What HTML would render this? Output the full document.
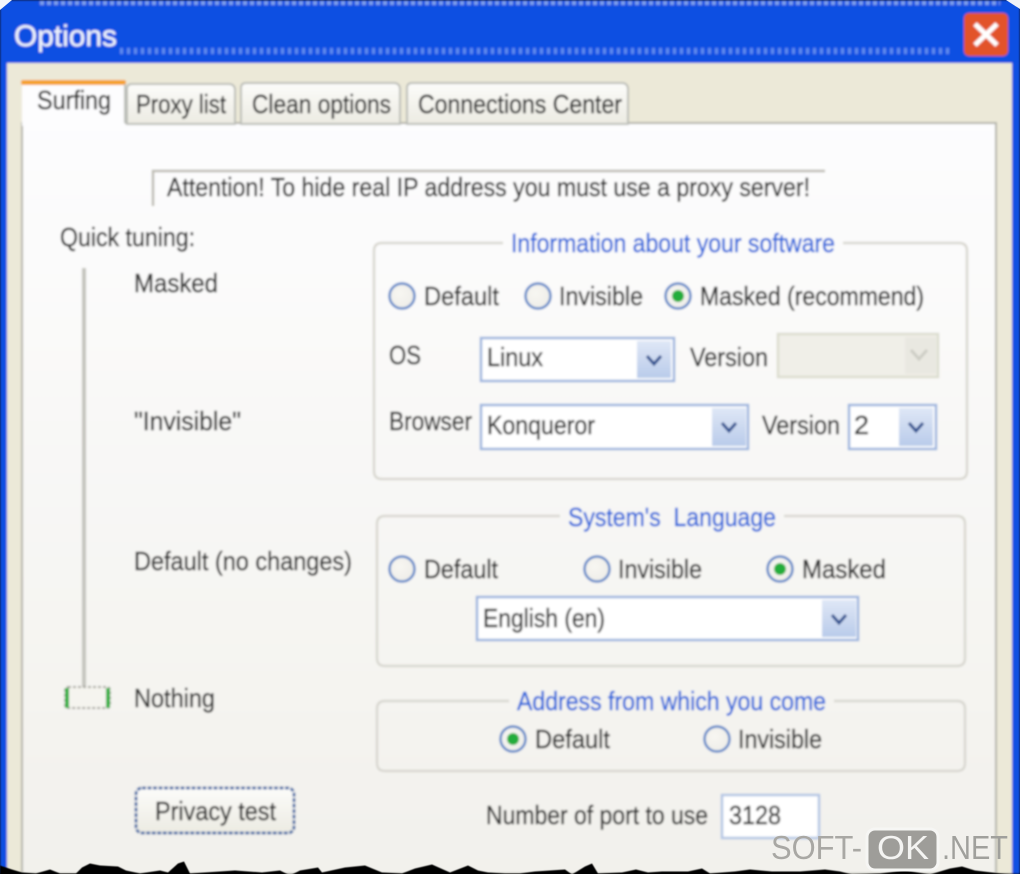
<!DOCTYPE html>
<html><head><meta charset="utf-8"><title>Options</title>
<style>
html,body{margin:0;padding:0;background:#000;width:1020px;height:874px;overflow:hidden}
svg{display:block}
text{font-family:"Liberation Sans",sans-serif;font-size:26px;fill:#333;stroke:#333;stroke-width:.45px;transform:translateY(-1px)}
.b{fill:#2a68dc;stroke:#2a68dc}
.w{stroke:none;transform:none}
</style></head><body>
<svg width="1020" height="874" viewBox="0 0 1020 874" xmlns="http://www.w3.org/2000/svg">
<defs>
<linearGradient id="p" x1="0" y1="0" x2="0" y2="1"><stop offset="0" stop-color="#fdfdfe"/><stop offset="1" stop-color="#f2f1ec"/></linearGradient>
<linearGradient id="t" x1="0" y1="0" x2="0" y2="1"><stop offset="0" stop-color="#fcfcfa"/><stop offset="1" stop-color="#ecebe2"/></linearGradient>
<linearGradient id="ar" x1="0" y1="0" x2="0" y2="1"><stop offset="0" stop-color="#dfe7f6"/><stop offset="1" stop-color="#b9cbea"/></linearGradient>
<radialGradient id="rd" cx=".4" cy=".4" r=".7"><stop offset="0" stop-color="#f7f6f2"/><stop offset="1" stop-color="#eeede7"/></radialGradient>
<filter id="bl" x="-2%" y="-2%" width="104%" height="104%"><feGaussianBlur stdDeviation="1.1"/></filter>
<filter id="bl2"><feGaussianBlur stdDeviation="0.4"/></filter>
</defs>
<g filter="url(#bl)">
<rect width="1020" height="874" fill="#0a50e2"/>
<line x1="40" y1="3" x2="1000" y2="3" stroke="#7ea0ec" stroke-width="4" stroke-dasharray="4 3"/>
<line x1="120" y1="51" x2="950" y2="51" stroke="#5f8cee" stroke-width="6" stroke-dasharray="3 4"/>
<rect x="7" y="63" width="1005" height="811" fill="#ece9d8"/>
<rect x="22" y="123" width="974" height="751" fill="url(#p)" stroke="#b4b3aa" stroke-width="2"/>
<text x="14" y="47" textLength="103" lengthAdjust="spacingAndGlyphs" style="font-size:30px;fill:#eef2fb;stroke:#eef2fb">Options</text>
<rect x="964" y="13" width="44" height="43" rx="5" fill="#e2532a"/>
<path d="M975 24L997 45M997 24L975 45" stroke="#fff" stroke-width="5"/>

<!-- tabs -->
<path d="M127 124V89q0-5 5-5H229q5 0 6 5V124Z" fill="url(#t)" stroke="#bcbeb8" stroke-width="2"/>
<path d="M241 124V88q0-5 5-5H394q5 0 6 5V124Z" fill="url(#t)" stroke="#bcbeb8" stroke-width="2"/>
<path d="M407 124V88q0-5 5-5H622q5 0 6 5V124Z" fill="url(#t)" stroke="#bcbeb8" stroke-width="2"/>
<path d="M22 126V84q0-3 3-3H122q3 0 3 3V126Z" fill="#fdfdfe"/>
<rect x="21" y="80" width="105" height="5" rx="2" fill="#f5a02c"/>
<line x1="125" y1="84" x2="125" y2="123" stroke="#bcbeb8" stroke-width="2"/>
<text x="37" y="110" textLength="74" lengthAdjust="spacingAndGlyphs">Surfing</text>
<text x="136" y="114" textLength="90" lengthAdjust="spacingAndGlyphs">Proxy list</text>
<text x="252" y="114" textLength="139" lengthAdjust="spacingAndGlyphs">Clean options</text>
<text x="418" y="114" textLength="204" lengthAdjust="spacingAndGlyphs">Connections Center</text>

<!-- attention -->
<path d="M153 206V171H825" fill="none" stroke="#bdbcb3" stroke-width="2.5"/>
<text x="167" y="197" textLength="643" lengthAdjust="spacingAndGlyphs">Attention! To hide real IP address you must use a proxy server!</text>

<!-- left column -->
<text x="60" y="247" textLength="135" lengthAdjust="spacingAndGlyphs">Quick tuning:</text>
<line x1="84" y1="268" x2="84" y2="688" stroke="#c4c4be" stroke-width="4"/>
<text x="134" y="293" textLength="84" lengthAdjust="spacingAndGlyphs">Masked</text>
<text x="134" y="431" textLength="107" lengthAdjust="spacingAndGlyphs">"Invisible"</text>
<text x="134" y="571" textLength="218" lengthAdjust="spacingAndGlyphs">Default (no changes)</text>
<text x="134" y="708" textLength="81" lengthAdjust="spacingAndGlyphs">Nothing</text>
<rect x="65" y="687" width="45" height="21" rx="3" fill="#f5f4ef" stroke="#a5a59d" stroke-width="2" stroke-dasharray="3 2"/>
<rect x="65" y="688" width="4" height="20" fill="#2fb040"/>
<rect x="106" y="688" width="4" height="20" fill="#2fb040"/>
<rect x="136" y="788" width="158" height="45" rx="6" fill="url(#t)" stroke="#4a6ea8" stroke-width="3" stroke-dasharray="4 1.5"/>
<text x="155" y="821" textLength="121" lengthAdjust="spacingAndGlyphs">Privacy test</text>

<!-- port -->
<text x="486" y="825" textLength="222" lengthAdjust="spacingAndGlyphs">Number of port to use</text>
<rect x="722" y="795" width="97" height="43" fill="#fff" stroke="#b4c6e4" stroke-width="2.5"/>
<text x="729" y="825" textLength="52" lengthAdjust="spacingAndGlyphs">3128</text>

<!-- group 1 -->
<path d="M503 243H382q-8 0-8 8V471q0 8 8 8H959q8 0 8-8V251q0-8-8-8H843" fill="none" stroke="#d9d8d1" stroke-width="2.5"/>
<text class="b" x="511" y="253" textLength="324" lengthAdjust="spacingAndGlyphs">Information about your software</text>
<circle cx="402" cy="296" r="12.5" fill="url(#rd)" stroke="#5c86c8" stroke-width="2.5"/>
<text x="424" y="306" textLength="75" lengthAdjust="spacingAndGlyphs">Default</text>
<circle cx="538" cy="296" r="12.5" fill="url(#rd)" stroke="#5c86c8" stroke-width="2.5"/>
<text x="559" y="306" textLength="84" lengthAdjust="spacingAndGlyphs">Invisible</text>
<circle cx="678" cy="296" r="12.5" fill="url(#rd)" stroke="#5c86c8" stroke-width="2.5"/>
<circle cx="678" cy="296" r="6" fill="#22ad3a"/>
<text x="700" y="306" textLength="224" lengthAdjust="spacingAndGlyphs">Masked (recommend)</text>

<text x="389" y="365" textLength="32" lengthAdjust="spacingAndGlyphs">OS</text>
<rect x="481" y="338" width="193" height="43" fill="#fff" stroke="#9db5de" stroke-width="2.5"/>
<rect x="637" y="341" width="34" height="37" fill="url(#ar)"/>
<path d="M647 356l7 8 7-8" fill="none" stroke="#2a4f8f" stroke-width="3"/>
<text x="487" y="367" textLength="56" lengthAdjust="spacingAndGlyphs">Linux</text>
<text x="690" y="367" textLength="78" lengthAdjust="spacingAndGlyphs">Version</text>
<rect x="778" y="334" width="160" height="43" fill="#f0efe8" stroke="#dcddd0" stroke-width="2.5"/>
<rect x="905" y="337" width="31" height="37" fill="#e9e8e1"/>
<path d="M911 350l8 9 8-9" fill="none" stroke="#cdcdc5" stroke-width="3"/>

<text x="389" y="431" textLength="83" lengthAdjust="spacingAndGlyphs">Browser</text>
<rect x="481" y="405" width="267" height="44" fill="#fff" stroke="#9db5de" stroke-width="2.5"/>
<rect x="712" y="408" width="34" height="38" fill="url(#ar)"/>
<path d="M722 423l7 8 7-8" fill="none" stroke="#2a4f8f" stroke-width="3"/>
<text x="487" y="435" textLength="108" lengthAdjust="spacingAndGlyphs">Konqueror</text>
<text x="762" y="435" textLength="78" lengthAdjust="spacingAndGlyphs">Version</text>
<rect x="849" y="405" width="87" height="44" fill="#fff" stroke="#9db5de" stroke-width="2.5"/>
<rect x="899" y="408" width="34" height="38" fill="url(#ar)"/>
<path d="M909 423l7 8 7-8" fill="none" stroke="#2a4f8f" stroke-width="3"/>
<text x="854" y="435" textLength="15" lengthAdjust="spacingAndGlyphs">2</text>

<!-- group 2 -->
<path d="M560 516H385q-8 0-8 8V658q0 8 8 8H957q8 0 8-8V524q0-8-8-8H784" fill="none" stroke="#d9d8d1" stroke-width="2.5"/>
<text class="b" x="568" y="527" textLength="208" lengthAdjust="spacingAndGlyphs" xml:space="preserve">System's  Language</text>
<circle cx="402" cy="569" r="12.5" fill="url(#rd)" stroke="#5c86c8" stroke-width="2.5"/>
<text x="424" y="579" textLength="74" lengthAdjust="spacingAndGlyphs">Default</text>
<circle cx="597" cy="569" r="12.5" fill="url(#rd)" stroke="#5c86c8" stroke-width="2.5"/>
<text x="618" y="579" textLength="84" lengthAdjust="spacingAndGlyphs">Invisible</text>
<circle cx="780" cy="569" r="12.5" fill="url(#rd)" stroke="#5c86c8" stroke-width="2.5"/>
<circle cx="780" cy="569" r="6" fill="#22ad3a"/>
<text x="802" y="579" textLength="84" lengthAdjust="spacingAndGlyphs">Masked</text>
<rect x="477" y="597" width="381" height="43" fill="#fff" stroke="#9db5de" stroke-width="2.5"/>
<rect x="822" y="600" width="34" height="37" fill="url(#ar)"/>
<path d="M832 615l7 8 7-8" fill="none" stroke="#2a4f8f" stroke-width="3"/>
<text x="483" y="628" textLength="122" lengthAdjust="spacingAndGlyphs">English (en)</text>

<!-- group 3 -->
<path d="M509 701H385q-8 0-8 8V763q0 8 8 8H957q8 0 8-8V709q0-8-8-8H834" fill="none" stroke="#d9d8d1" stroke-width="2.5"/>
<text class="b" x="517" y="711" textLength="309" lengthAdjust="spacingAndGlyphs">Address from which you come</text>
<circle cx="513" cy="739" r="12.5" fill="url(#rd)" stroke="#5c86c8" stroke-width="2.5"/>
<circle cx="513" cy="739" r="6" fill="#22ad3a"/>
<text x="535" y="749" textLength="75" lengthAdjust="spacingAndGlyphs">Default</text>
<circle cx="717" cy="739" r="12.5" fill="url(#rd)" stroke="#5c86c8" stroke-width="2.5"/>
<text x="738" y="749" textLength="84" lengthAdjust="spacingAndGlyphs">Invisible</text>
</g>

<!-- top corners -->
<path d="M0 0H12L0 10Z" fill="#f4f6fb"/>
<path d="M1020 0H1006L1020 9Z" fill="#f0f2f8"/>

<!-- torn bottom edge -->
<path filter="url(#bl2)" fill="#000" transform="translate(0 1.5)" d="M0 874V864L12 868 22 871 36 872 50 868 60 872 76 872 82 866 90 862 100 864 118 865 126 869 140 872 160 869 168 871 178 862 184 860 190 872 205 871 235 869 262 871 280 869 290 874 300 869 318 866 322 871 345 866 365 864 382 871 402 872 415 867 432 863 450 871 468 864 478 869 488 871 505 872 520 872 535 870 565 868 572 873 585 865 592 862 598 872 622 871 636 868 648 871 662 870 688 870 702 867 710 872 735 870 750 868 772 870 800 870 825 868 840 870 852 873 880 872 905 869 930 873 950 867 962 865 975 869 1000 872 1020 874Z"/>

<!-- watermark -->
<rect x="867" y="829" width="71" height="41" rx="8" fill="#9e9d99" stroke="#f6f6f4" stroke-width="3"/>
<text class="w" x="771" y="859" textLength="91" lengthAdjust="spacingAndGlyphs" style="font-size:33px;fill:#a9a8a4">SOFT-</text>
<text class="w" x="877" y="859" textLength="52" lengthAdjust="spacingAndGlyphs" style="font-size:33px;fill:#f4f4f2">OK</text>
<text class="w" x="942" y="859" textLength="66" lengthAdjust="spacingAndGlyphs" style="font-size:33px;fill:#a0a09c">.NET</text>
</svg>
</body></html>
